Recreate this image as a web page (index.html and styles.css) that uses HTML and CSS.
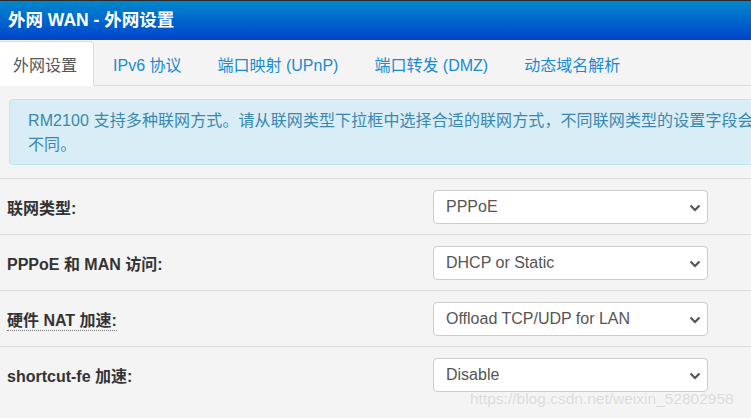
FILE: index.html
```html
<!DOCTYPE html>
<html lang="zh-CN">
<head>
<meta charset="utf-8">
<title>外网 WAN - 外网设置</title>
<link rel="stylesheet" href="styles.css">
</head>
<body>
<div class="page">
  <div class="topline"></div>
  <header class="header">外网 WAN - 外网设置</header>
  <nav class="tabs">
    <a class="tab active">外网设置</a>
    <a class="tab">IPv6 协议</a>
    <a class="tab">端口映射 (UPnP)</a>
    <a class="tab">端口转发 (DMZ)</a>
    <a class="tab">动态域名解析</a>
  </nav>
  <div class="alert">RM2100 支持多种联网方式。请从联网类型下拉框中选择合适的联网方式，不同联网类型的设置字段会<br>不同。</div>
  <div class="form">
    <div class="row">
      <label class="label">联网类型:</label>
      <div class="select"><span>PPPoE</span><svg class="chev" width="12" height="8" viewBox="0 0 12 8"><path d="M1.5 1.5 L6 6 L10.5 1.5" fill="none" stroke="#555" stroke-width="2.2"/></svg></div>
    </div>
    <div class="row">
      <label class="label">PPPoE 和 MAN 访问:</label>
      <div class="select"><span>DHCP or Static</span><svg class="chev" width="12" height="8" viewBox="0 0 12 8"><path d="M1.5 1.5 L6 6 L10.5 1.5" fill="none" stroke="#555" stroke-width="2.2"/></svg></div>
    </div>
    <div class="row">
      <label class="label"><span class="dotted">硬件 NAT 加速:</span></label>
      <div class="select"><span>Offload TCP/UDP for LAN</span><svg class="chev" width="12" height="8" viewBox="0 0 12 8"><path d="M1.5 1.5 L6 6 L10.5 1.5" fill="none" stroke="#555" stroke-width="2.2"/></svg></div>
    </div>
    <div class="row">
      <label class="label">shortcut-fe 加速:</label>
      <div class="select"><span>Disable</span><svg class="chev" width="12" height="8" viewBox="0 0 12 8"><path d="M1.5 1.5 L6 6 L10.5 1.5" fill="none" stroke="#555" stroke-width="2.2"/></svg></div>
    </div>
  </div>
  <div class="watermark">https://blog.csdn.net/weixin_52802958</div>
</div>
</body>
</html>
```
FILE: styles.css
```css
html, body {
  margin: 0;
  padding: 0;
  background: #f4f4f4;
  overflow: hidden;
}
body {
  font-family: "Liberation Sans", Arial, "Noto Sans CJK SC", sans-serif;
  font-size: 16px;
  color: #333;
}
.page {
  position: relative;
  width: 751px;
  height: 418px;
  overflow: hidden;
}
.topline {
  height: 1px;
  background: #2a2a2a;
}
.header {
  height: 39px;
  line-height: 39px;
  padding-left: 8px;
  background: linear-gradient(to bottom, #0088cc, #0044cc);
  color: #fff;
  font-weight: bold;
  font-size: 17.5px;
  white-space: nowrap;
}
.tabs {
  display: flex;
  height: 44px;
  margin-top: 1px;
  margin-left: -4px;
  border-bottom: 1px solid #dcdcdc;
  white-space: nowrap;
}
.tab {
  display: flex;
  align-items: center;
  padding: 0 16px;
  margin-right: 2px;
  margin-bottom: -1px;
  color: #1a8ad0;
  border: 1px solid transparent;
  border-radius: 4px 4px 0 0;
}
.tab.active {
  background: #fff;
  color: #555;
  border-color: #dcdcdc;
  border-bottom-color: #fff;
}
.alert {
  margin: 13px 0 0 9px;
  width: 800px;
  padding: 9px 18px 7px 18px;
  line-height: 24px;
  background: #d9edf7;
  border: 1px solid #bce8f1;
  border-radius: 4px;
  color: #3a87ad;
  white-space: nowrap;
  letter-spacing: 0.1px;
}
.form {
  margin-top: 13px;
}
.row {
  display: grid;
  grid-template-columns: 426px 275px;
  align-items: center;
  height: 55px;
  padding-left: 7px;
  border-top: 1px solid #dcdcdc;
}
.label {
  font-weight: bold;
  color: #333;
  white-space: nowrap;
}
.dotted {
  border-bottom: 1px dotted #777;
  padding-bottom: 1px;
}
.select {
  position: relative;
  box-sizing: border-box;
  height: 34px;
  padding: 0 12px;
  display: flex;
  align-items: center;
  background: #fff;
  border: 1px solid #ccc;
  border-radius: 4px;
  color: #555;
  white-space: nowrap;
}
.chev {
  position: absolute;
  right: 6px;
  top: 13px;
}
.watermark {
  position: absolute;
  left: 470px;
  top: 390px;
  font-size: 15.5px;
  color: #dadada;
  text-shadow: 0 0 1px #fff;
  white-space: nowrap;
}
```
